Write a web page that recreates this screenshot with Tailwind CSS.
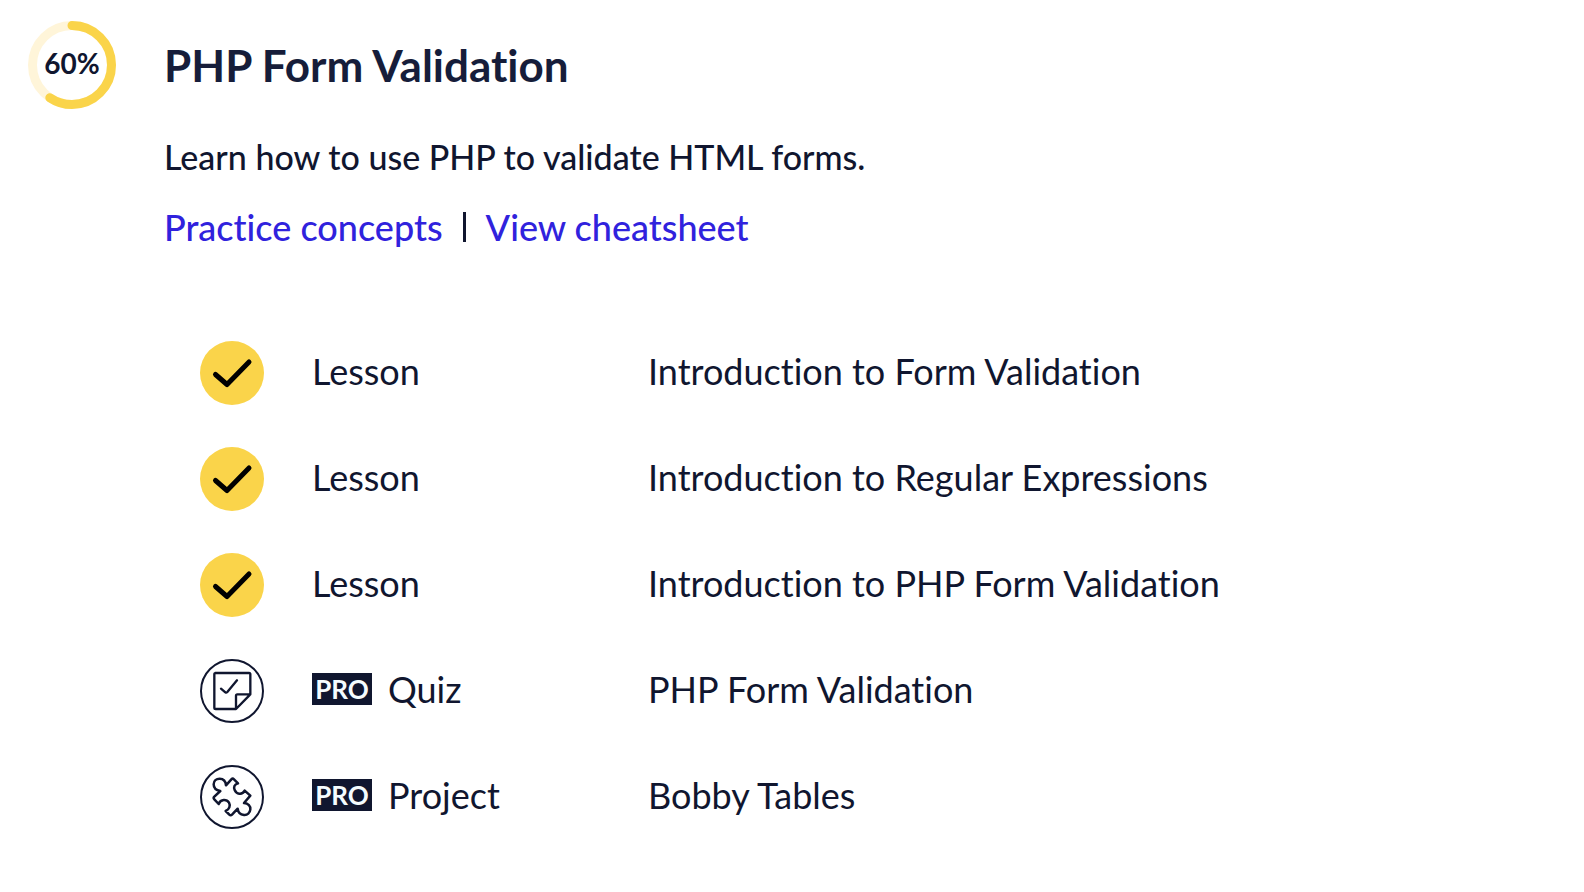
<!DOCTYPE html>
<html lang="en">
<head>
<meta charset="utf-8">
<meta name="viewport" content="width=device-width, initial-scale=1">
<title>PHP Form Validation</title>
<script src="https://cdn.jsdelivr.net/npm/@tailwindcss/browser@4"></script>
</head>
<body class="bg-white font-['Lato',sans-serif] text-[#10162f] [font-variant-ligatures:none]">
<main class="px-7 pt-[21px]">
  <header class="flex items-center gap-12">
    <div class="relative size-[88px] shrink-0" role="img" aria-label="60% complete">
      <svg class="size-full" viewBox="1 1 88 88" fill="none" stroke-width="9">
        <circle cx="45" cy="45" r="39.5" stroke="#fff5d9"/>
        <circle cx="45" cy="45" r="39.5" stroke="#fad44a" stroke-linecap="round" pathLength="100" stroke-dasharray="59.5 100" transform="rotate(-90 45 45)"/>
      </svg>
      <span class="absolute inset-0 flex items-center justify-center pb-1 text-[28px] font-bold">60%</span>
    </div>
    <h1 class="text-[44px] leading-[52px] font-bold text-[#161d3a]">PHP Form Validation</h1>
  </header>

  <div class="pl-[136px] text-[36px] leading-[44px] font-medium">
    <p class="mt-[26px] text-[34px]">Learn how to use PHP to validate HTML forms.</p>
    <nav class="mt-[26px] flex items-center">
      <a href="#practice" class="text-[#3022dd]">Practice concepts</a>
      <span class="mx-5 h-[30px] w-[3px] bg-[#10162f]"></span>
      <a href="#cheatsheet" class="text-[#3022dd]">View cheatsheet</a>
    </nav>
  </div>

  <ul class="mt-[92px] flex flex-col gap-[42px] pl-[172px] text-[36px] leading-[44px]">
    <li class="flex items-center">
      <svg class="mr-12 size-16 shrink-0" viewBox="0 0 64 64" fill="none" role="img" aria-label="Completed"><circle cx="32" cy="32" r="32" fill="#fad44a"/><path d="M15.5 33.5 27 43.500 49 21" stroke="#000" stroke-width="5" stroke-linecap="round" stroke-linejoin="round"/></svg>
      <span class="w-[336px] shrink-0 pb-1">Lesson</span>
      <span class="pb-1">Introduction to Form Validation</span>
    </li>
    <li class="flex items-center">
      <svg class="mr-12 size-16 shrink-0" viewBox="0 0 64 64" fill="none" role="img" aria-label="Completed"><circle cx="32" cy="32" r="32" fill="#fad44a"/><path d="M15.5 33.5 27 43.500 49 21" stroke="#000" stroke-width="5" stroke-linecap="round" stroke-linejoin="round"/></svg>
      <span class="w-[336px] shrink-0 pb-1">Lesson</span>
      <span class="pb-1">Introduction to Regular Expressions</span>
    </li>
    <li class="flex items-center">
      <svg class="mr-12 size-16 shrink-0" viewBox="0 0 64 64" fill="none" role="img" aria-label="Completed"><circle cx="32" cy="32" r="32" fill="#fad44a"/><path d="M15.5 33.5 27 43.500 49 21" stroke="#000" stroke-width="5" stroke-linecap="round" stroke-linejoin="round"/></svg>
      <span class="w-[336px] shrink-0 pb-1">Lesson</span>
      <span class="pb-1">Introduction to PHP Form Validation</span>
    </li>
    <li class="flex items-center">
      <svg class="mr-12 size-16 shrink-0" viewBox="30 30 192 192" fill="none" stroke="#10162f" stroke-linecap="round" stroke-linejoin="round" role="img" aria-label="Quiz">
        <circle cx="126" cy="126" r="93" stroke-width="6"/>
        <path d="M76 72H177Q181 72 181 76V136L138 180H77Q73 180 73 176V76Q73 72 77 72M138 180V140Q138 136 142 136H181M93 119 106 130Q109 132 112 129L141 94" stroke-width="7"/>
      </svg>
      <span class="flex w-[336px] shrink-0 items-center gap-4 pb-1"><span class="flex h-8 w-[60px] items-center justify-center bg-[#10162f] text-[26px] font-bold text-[#f5fcff]">PRO</span>Quiz</span>
      <span class="pb-1">PHP Form Validation</span>
    </li>
    <li class="flex items-center">
      <svg class="mr-12 size-16 shrink-0" viewBox="30 33 192 192" fill="none" stroke="#10162f" stroke-linecap="round" stroke-linejoin="round" role="img" aria-label="Project">
        <circle cx="126" cy="129" r="93" stroke-width="6"/>
        <path d="M91 111C78 109 71 101 71 91C71 81 79 74 89 74C100 74 107 82 108 94L124 76Q128 72 132 76L144 88C133 91 130 99 134 108C139 120 156 125 164 110L181 125L162 147C175 148 182 156 181 166C180 177 172 184 162 183C151 182 144 174 143 164L126 182Q122 186 118 182L107 171C118 166 122 155 117 146C110 135 92 134 86 150L73 136Q69 132 73 128Z" stroke-width="7.500"/>
      </svg>
      <span class="flex w-[336px] shrink-0 items-center gap-4 pb-1"><span class="flex h-8 w-[60px] items-center justify-center bg-[#10162f] text-[26px] font-bold text-[#f5fcff]">PRO</span>Project</span>
      <span class="pb-1">Bobby Tables</span>
    </li>
  </ul>
</main>
</body>
</html>
